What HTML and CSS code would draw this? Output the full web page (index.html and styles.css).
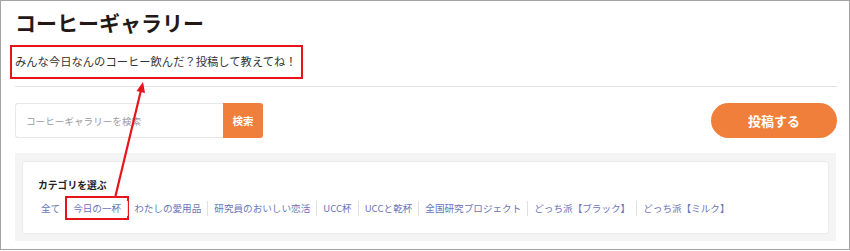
FILE: index.html
```html
<!DOCTYPE html>
<html lang="ja">
<head>
<meta charset="utf-8">
<title>コーヒーギャラリー</title>
<link rel="stylesheet" href="styles.css">
</head>
<body>
<div class="frame">
  <div class="page">
    <h1 class="title">コーヒーギャラリー</h1>
    <p class="lead">みんな今日なんのコーヒー飲んだ？投稿して教えてね！</p>
    <hr class="rule">
    <div class="toolbar">
      <div class="search">
        <input class="search-input" type="text" placeholder="コーヒーギャラリーを検索">
        <button class="search-btn" type="button">検索</button>
      </div>
      <button class="post-btn" type="button">投稿する</button>
    </div>
    <div class="cat-wrap">
      <div class="cat-card">
        <div class="cat-title">カテゴリを選ぶ</div>
        <div class="cat-list">
          <a class="cat-item first">全て</a>
          <span class="sep"></span>
          <a class="cat-item marked">今日の一杯</a>
          <span class="sep"></span>
          <a class="cat-item">わたしの愛用品</a>
          <span class="sep"></span>
          <a class="cat-item">研究員のおいしい恋活</a>
          <span class="sep"></span>
          <a class="cat-item">UCC杯</a>
          <span class="sep"></span>
          <a class="cat-item">UCCと乾杯</a>
          <span class="sep"></span>
          <a class="cat-item">全国研究プロジェクト</a>
          <span class="sep"></span>
          <a class="cat-item">どっち派【ブラック】</a>
          <span class="sep"></span>
          <a class="cat-item">どっち派【ミルク】</a>
        </div>
      </div>
    </div>
  </div>
  <svg class="arrow" width="850" height="251" viewBox="0 0 850 251">
    <line x1="115.5" y1="196" x2="140.8" y2="91" stroke="#e8141b" stroke-width="2.2"/>
    <polygon points="143,82 145,93 136.5,91" fill="#e8141b"/>
  </svg>
</div>
</body>
</html>
```
FILE: styles.css
```css
html, body {
  margin: 0;
  padding: 0;
  background: #ffffff;
}
body {
  font-family: "Noto Sans CJK JP", "Noto Sans", sans-serif;
  color: #333333;
}
.frame {
  position: relative;
  box-sizing: border-box;
  width: 850px;
  height: 250px;
  border: 1px solid #a3a3a3;
  overflow: hidden;
}
.page {
  padding: 0 12px 0 14px;
}
.title {
  margin: 0;
  padding-top: 8px;
  font-size: 21px;
  line-height: 27px;
  font-weight: 700;
  color: #231815;
  letter-spacing: 0;
}
.lead {
  display: inline-block;
  margin: 9px 0 0 -5px;
  padding: 7px 4px 8px 3px;
  border: 2px solid #e8141b;
  font-size: 11.3px;
  line-height: 15px;
  color: #333333;
}
.rule {
  margin: 7px 0 0 0;
  border: 0;
  border-top: 1px solid #e2e2e2;
  height: 0;
}
.toolbar {
  display: flex;
  align-items: center;
  margin-top: 16px;
}
.search {
  display: flex;
  height: 35px;
}
.search-input {
  box-sizing: border-box;
  width: 208px;
  height: 35px;
  margin: 0;
  padding: 0 0 0 10px;
  border: 1px solid #e8e8e8;
  border-right: 0;
  border-radius: 3px 0 0 3px;
  font-family: "Noto Sans CJK JP", sans-serif;
  font-size: 9.6px;
  color: #333;
  outline: none;
}
.search-input::placeholder {
  color: #9a9a9a;
}
.search-btn {
  width: 40px;
  height: 35px;
  margin: 0;
  padding: 0;
  border: 0;
  border-radius: 0 3px 3px 0;
  background: #ef7f3b;
  color: #ffffff;
  font-family: "Noto Sans CJK JP", sans-serif;
  font-size: 10.5px;
  font-weight: 700;
}
.post-btn {
  margin-left: auto;
  width: 126px;
  height: 35px;
  padding: 0;
  border: 0;
  border-radius: 18px;
  background: #ef7f3b;
  color: #ffffff;
  font-family: "Noto Sans CJK JP", sans-serif;
  font-size: 13px;
  font-weight: 700;
}
.cat-wrap {
  margin-top: 15px;
  margin-right: 1px;
  padding: 8px 7px 7px 7px;
  background: #f4f4f4;
}
.cat-card {
  box-sizing: border-box;
  height: 73px;
  padding: 16px 10px 0 15px;
  background: #ffffff;
  border: 1px solid #ebebeb;
  border-radius: 3px;
}
.cat-title {
  font-size: 9.8px;
  line-height: 14px;
  font-weight: 700;
  color: #222222;
}
.cat-list {
  display: flex;
  align-items: center;
  margin-top: 6px;
  margin-left: 3px;
}
.cat-item {
  padding: 0 6px;
  font-size: 9.6px;
  line-height: 20px;
  color: #6b73b8;
  white-space: nowrap;
  text-decoration: none;
}
.cat-item.first {
  padding-left: 0;
}
.cat-item.marked {
  outline: 2px solid #e8141b;
  outline-offset: 0;
}
.sep {
  width: 1px;
  height: 15px;
  background: #e0e0e0;
}
.arrow {
  position: absolute;
  left: -1px;
  top: -1px;
  pointer-events: none;
}
```
